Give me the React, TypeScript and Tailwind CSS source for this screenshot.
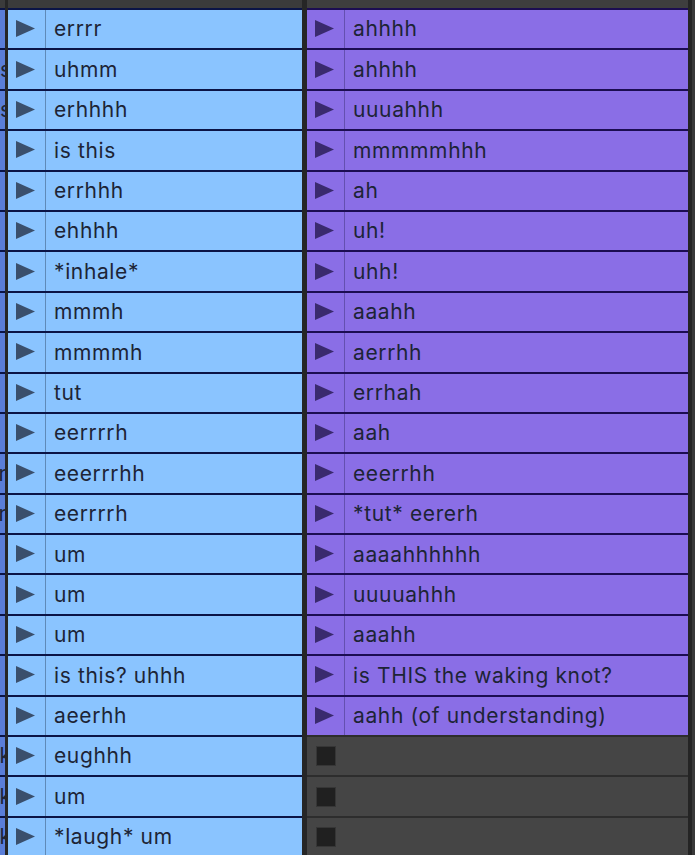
import React from "react";

const left = [
  "errrr",
  "uhmm",
  "erhhhh",
  "is this",
  "errhhh",
  "ehhhh",
  "*inhale*",
  "mmmh",
  "mmmmh",
  "tut",
  "eerrrrh",
  "eeerrrhh",
  "eerrrrh",
  "um",
  "um",
  "um",
  "is this? uhhh",
  "aeerhh",
  "eughhh",
  "um",
  "*laugh* um",
];

const right: (string | null)[] = [
  "ahhhh",
  "ahhhh",
  "uuuahhh",
  "mmmmmhhh",
  "ah",
  "uh!",
  "uhh!",
  "aaahh",
  "aerrhh",
  "errhah",
  "aah",
  "eeerrhh",
  "*tut* eererh",
  "aaaahhhhhh",
  "uuuuahhh",
  "aaahh",
  "is THIS the waking knot?",
  "aahh (of understanding)",
  null,
  null,
  null,
];

// letters of the track to the left, mostly hidden
const edge = ["", "s", "s", "", "", "", "", "", "", "", "", "n", "n", "l", "l", "l", "", "", "k", "k", "k"];

function Play({ color }: { color: string }) {
  return (
    <svg width="20" height="18" viewBox="0 0 20 18" className="shrink-0">
      <polygon points="0,0 19,8.5 0,17" fill={color} />
    </svg>
  );
}

function ClipRow({ name, tone }: { name: string; tone: "blue" | "purple" }) {
  const blue = tone === "blue";
  return (
    <div
      className={`h-[40.4px] shrink-0 flex items-stretch border-t-2 ${
        blue ? "bg-[#8ac4ff] border-[#0b1446]" : "bg-[#8a6ee6] border-[#1c0d52]"
      }`}
    >
      <div className="w-[37px] flex items-center pl-[8px]">
        <Play color={blue ? "#3a4f6c" : "#3a2a6e"} />
      </div>
      <div className={`w-px ${blue ? "bg-[#5f8ab8]" : "bg-[#6450b0]"}`} />
      <div className="flex items-center pl-[8px] text-[21px] tracking-[0.03em] text-[#1d2436] whitespace-nowrap overflow-hidden">
        {name}
      </div>
    </div>
  );
}

function EmptyRow() {
  return (
    <div className="h-[40.4px] shrink-0 flex items-center bg-[#454545] border-t-2 border-[#2d2d2d] pl-[9px]">
      <div className="w-[20px] h-[20px] bg-[#202020] border border-[#363636]" />
    </div>
  );
}

export default function App() {
  return (
    <div
      className="w-[695px] h-[855px] overflow-hidden bg-[#262626] flex"
      style={{ fontFamily: "Inter, 'Open Sans', sans-serif" }}
    >
      {/* neighbouring track, cut off */}
      <div className="w-[5px] shrink-0 flex flex-col">
        <div className="h-[8px] shrink-0 bg-[#3b3b3b]" />
        {edge.map((c, i) => (
          <div
            key={i}
            className="h-[40.4px] shrink-0 bg-[#5a7ed8] border-t-2 border-[#0b1446] flex items-center justify-end overflow-hidden text-[21px] text-[#1d2436]"
          >
            <span className="mr-[-6px]">{c}</span>
          </div>
        ))}
      </div>
      <div className="w-[3px] shrink-0 bg-[#262626]" />

      <div className="w-[294px] shrink-0 flex flex-col">
        <div className="h-[8px] shrink-0 bg-[#3b3b3b]" />
        {left.map((n, i) => (
          <ClipRow key={i} name={n} tone="blue" />
        ))}
      </div>
      <div className="w-[5px] shrink-0 bg-[#262626]" />

      <div className="w-[381px] shrink-0 flex flex-col">
        <div className="h-[8px] shrink-0 bg-[#3e3e3e]" />
        {right.map((n, i) =>
          n ? <ClipRow key={i} name={n} tone="purple" /> : <EmptyRow key={i} />
        )}
      </div>
      <div className="w-[4px] shrink-0 bg-[#242424]" />
      <div className="flex-1 bg-[#393939]" />
    </div>
  );
}
